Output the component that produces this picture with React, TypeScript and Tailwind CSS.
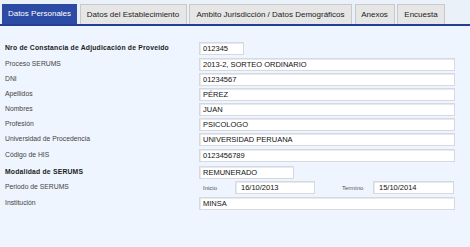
import React from 'react';

const tabs = [
  { label: 'Datos Personales', w: 'w-[75px]' },
  { label: 'Datos del Establecimiento', w: 'w-[107px]' },
  { label: 'Ambito Jurisdicción / Datos Demográficos', w: 'w-[163px]' },
  { label: 'Anexos', w: 'w-[40px]' },
  { label: 'Encuesta', w: 'w-[48px]' },
];

const Field = ({ value, className = '' }: { value: string; className?: string }) => (
  <div
    className={`h-[13px] bg-white border border-[#d6dae0] shadow-[inset_1px_1px_0_#e6e9ee] px-[3px] flex items-center text-[7.5px] text-[#111] leading-none ${className}`}
  >
    {value}
  </div>
);

const Row = ({
  label,
  bold = false,
  className = '',
  children,
}: {
  label: string;
  bold?: boolean;
  className?: string;
  children: React.ReactNode;
}) => (
  <div className={`flex items-center h-[13px] ${className}`}>
    <div
      className={`w-[194px] shrink-0 text-[6.8px] leading-none ${bold ? 'font-bold text-[#222] tracking-[0.2px]' : 'text-[#444]'}`}
    >
      {label}
    </div>
    <div className="flex-1 flex items-center">{children}</div>
  </div>
);

export default function App() {
  return (
    <div className="w-[470px] h-[247px] bg-[#eef5fe] overflow-hidden" style={{ fontFamily: '"Liberation Sans", Arial, sans-serif' }}>
      {/* tab strip */}
      <div className="bg-[#ebf1f9] pt-[4px] pl-[2px] flex items-end gap-[2.5px] border-b-[2px] border-[#223f95]">
        {tabs.map((t, i) => (
          <div
            key={t.label}
            className={`${t.w} h-[20px] flex items-center justify-center text-[8px] leading-none ${
              i === 0
                ? 'bg-[#2b4ba4] text-white'
                : 'bg-[#e6e6e6] text-[#222] border border-b-0 border-[#c9c9c9]'
            }`}
          >
            {t.label}
          </div>
        ))}
      </div>

      {/* form */}
      <div className="pl-[5px] pr-[15px] pt-[16px]">
        <Row label="Nro de Constancia de Adjudicación de Proveido" bold>
          <Field value="012345" className="w-[45px]" />
        </Row>
        <Row label="Proceso SERUMS" className="mt-[3px]">
          <Field value="2013-2, SORTEO ORDINARIO" className="w-full" />
        </Row>
        <Row label="DNI" className="mt-[2px]">
          <Field value="01234567" className="w-full" />
        </Row>
        <Row label="Apellidos" className="mt-[2px]">
          <Field value="PÉREZ" className="w-full" />
        </Row>
        <Row label="Nombres" className="mt-[2px]">
          <Field value="JUAN" className="w-full" />
        </Row>
        <Row label="Profesión" className="mt-[2px]">
          <Field value="PSICOLOGO" className="w-full" />
        </Row>
        <Row label="Universidad de Procedencia" className="mt-[2px]">
          <Field value="UNIVERSIDAD PERUANA" className="w-full" />
        </Row>
        <Row label="Código de HIS" className="mt-[3px]">
          <Field value="0123456789" className="w-full" />
        </Row>
        <Row label="Modalidad de SERUMS" bold className="mt-[4px]">
          <Field value="REMUNERADO" className="w-[95px]" />
        </Row>
        <Row label="Periodo de SERUMS" className="mt-[2px]">
          <span className="w-[36px] pl-[4px] text-[6px] text-[#555] leading-none">Inicio</span>
          <Field value="16/10/2013" className="w-[80px] pl-[5px]" />
          <span className="w-[58px] pl-[27px] text-[6px] text-[#555] leading-none">Termino</span>
          <Field value="15/10/2014" className="w-[81px] pl-[5px]" />
        </Row>
        <Row label="Institución" className="mt-[3px]">
          <Field value="MINSA" className="w-full" />
        </Row>
      </div>
    </div>
  );
}
